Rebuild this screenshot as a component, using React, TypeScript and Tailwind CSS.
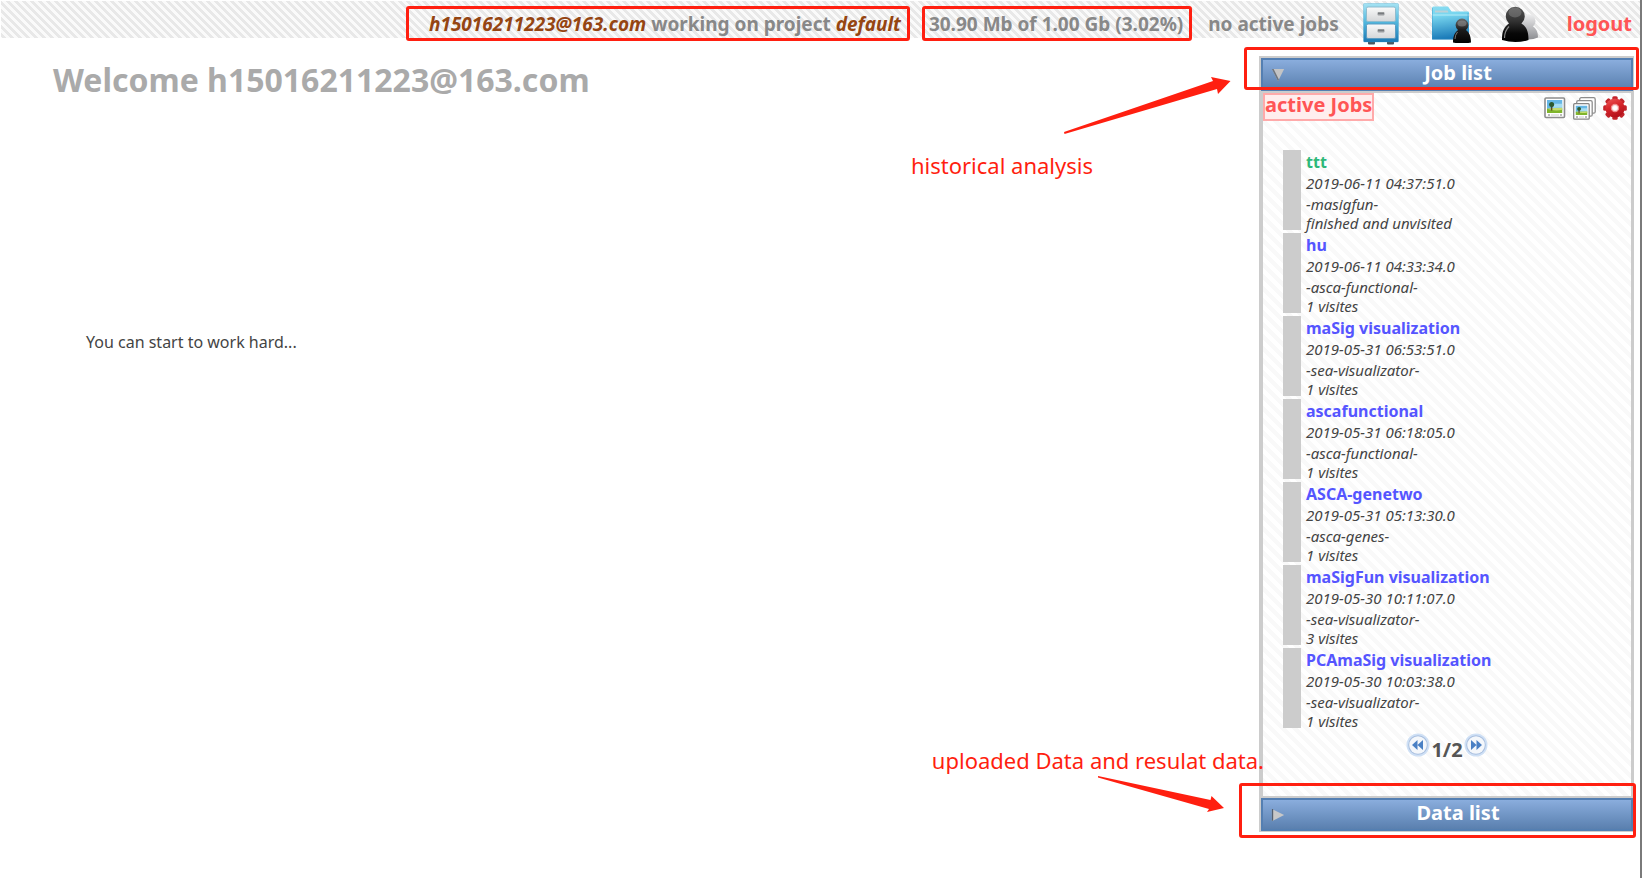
import type { ReactNode } from "react";

type Job = { name: string; date: string; tool: string; status: string; fresh?: boolean };

const jobs: Job[] = [
  { name: "ttt", date: "2019-06-11 04:37:51.0", tool: "-masigfun-", status: "finished and unvisited", fresh: true },
  { name: "hu", date: "2019-06-11 04:33:34.0", tool: "-asca-functional-", status: "1 visites" },
  { name: "maSig visualization", date: "2019-05-31 06:53:51.0", tool: "-sea-visualizator-", status: "1 visites" },
  { name: "ascafunctional", date: "2019-05-31 06:18:05.0", tool: "-asca-functional-", status: "1 visites" },
  { name: "ASCA-genetwo", date: "2019-05-31 05:13:30.0", tool: "-asca-genes-", status: "1 visites" },
  { name: "maSigFun visualization", date: "2019-05-30 10:11:07.0", tool: "-sea-visualizator-", status: "3 visites" },
  { name: "PCAmaSig visualization", date: "2019-05-30 10:03:38.0", tool: "-sea-visualizator-", status: "1 visites" },
];

function CabinetIcon() {
  return (
    <svg width="36" height="42" viewBox="0 0 36 42" aria-hidden="true">
      <defs>
        <linearGradient id="cab" x1="0" y1="0" x2="0" y2="1">
          <stop offset="0" stopColor="#a5e3f3" />
          <stop offset="0.5" stopColor="#4fb5dc" />
          <stop offset="1" stopColor="#1b78b4" />
        </linearGradient>
        <linearGradient id="drawer" x1="0" y1="0" x2="0" y2="1">
          <stop offset="0" stopColor="#fafafa" />
          <stop offset="1" stopColor="#d4d6d8" />
        </linearGradient>
      </defs>
      <rect x="5" y="38" width="7" height="3.5" rx="1" fill="#4a5660" />
      <rect x="24" y="38" width="7" height="3.5" rx="1" fill="#4a5660" />
      <rect x="0.5" y="0.5" width="35" height="38.5" rx="1" fill="url(#cab)" stroke="#3c9fcb" strokeOpacity="0.3" />
      <rect x="3.5" y="4" width="29" height="14.5" rx="1.5" fill="url(#drawer)" stroke="#8fbccf" />
      <rect x="3.5" y="21" width="29" height="14.5" rx="1.5" fill="url(#drawer)" stroke="#5c9cc2" />
      <path d="M14.5 9.5h7v2q0 1-1 1h-5q-1 0-1-1z" fill="#9a9da0" />
      <path d="M15 9.5h6v1.2h-6z" fill="#6a6e71" />
      <path d="M14.5 26.5h7v2q0 1-1 1h-5q-1 0-1-1z" fill="#9a9da0" />
      <path d="M15 26.5h6v1.2h-6z" fill="#6a6e71" />
    </svg>
  );
}

function FolderUserIcon() {
  return (
    <svg width="42" height="42" viewBox="0 0 42 42" aria-hidden="true">
      <defs>
        <linearGradient id="fold" x1="0" y1="0" x2="0.15" y2="1">
          <stop offset="0" stopColor="#8adcf1" />
          <stop offset="0.3" stopColor="#78d6ef" />
          <stop offset="1" stopColor="#1a7ab8" />
        </linearGradient>
        <linearGradient id="pawn" x1="0" y1="0" x2="0" y2="1">
          <stop offset="0" stopColor="#6b6b6b" />
          <stop offset="0.45" stopColor="#1c1c1c" />
          <stop offset="1" stopColor="#000" />
        </linearGradient>
      </defs>
      <path d="M1 7q0-1.5 1.5-1.5h14.5l3.5 5h16.5q1 0 1 1v27h-37z" fill="url(#fold)" />
      <path d="M4 9.5h12.5l1 2h-13.5z" fill="#bcd0d6" />
      <path d="M1 14h37" stroke="#b5ecf8" strokeWidth="1" />
      <path d="M1.5 7v31h35.5v-26" fill="none" stroke="#2f93c6" strokeOpacity="0.4" />
      <path d="M22 41.5c0-7 2-10 5-12.5a6.4 6.400 0 1 1 8 0c3 2.500 5 5.500 5 12.500q-9 2-18 0z" fill="url(#pawn)" />
      <ellipse cx="31" cy="22.5" rx="4.5" ry="3" fill="#9a9a9a" opacity="0.5" />
      <path d="M26.5 31q-2.5 3-2.5 7" stroke="#777" strokeWidth="1" fill="none" />
    </svg>
  );
}

function UsersIcon() {
  return (
    <svg width="38" height="38" viewBox="0 0 38 38" aria-hidden="true">
      <defs>
        <linearGradient id="ghost" x1="0" y1="0" x2="0" y2="1">
          <stop offset="0" stopColor="#eeeeef" />
          <stop offset="1" stopColor="#8d8e92" />
        </linearGradient>
        <linearGradient id="body" x1="0" y1="0" x2="0" y2="1">
          <stop offset="0" stopColor="#555" />
          <stop offset="0.4" stopColor="#333" />
          <stop offset="0.75" stopColor="#080808" />
          <stop offset="1" stopColor="#000" />
        </linearGradient>
      </defs>
      <path d="M18 33c0-7 1-9 5-11.5a7 7 0 1 1 9 0c4 2.5 5 6.5 5 11q-8 3.5-19 0.5z" fill="url(#ghost)" />
      <path d="M1 35c0-9 2-13 7-16.5a9.5 9.5 0 1 1 12.5 0c5 3.5 7 7.5 7 16.5q-13 4-26.5 0z" fill="url(#body)" />
      <ellipse cx="14" cy="7.5" rx="6.5" ry="5" fill="#999" opacity="0.4" />
      <path d="M8 21.5q-4.5 4.5-4.5 11.5" stroke="#888" strokeWidth="1.2" fill="none" />
    </svg>
  );
}

function Scene() {
  return (
    <>
      <rect x="0" y="0" width="16" height="10" fill="#65b7e6" />
      <path d="M6 4h10v4H6z" fill="#a5dcf2" />
      <rect x="0" y="9" width="16" height="4.5" fill="#7fb52c" />
      <path d="M0 9q8 3 16 1v-2q-8 0-16 1z" fill="#c6dc70" />
      <path d="M4 5h1.5v6h-1.5z" fill="#5d4527" />
      <circle cx="4.8" cy="4.8" r="2.6" fill="#2c5a30" />
    </>
  );
}

function PictureIcon() {
  return (
    <svg width="22" height="22" viewBox="0 0 22 22" aria-hidden="true">
      <rect x="1" y="1" width="19.5" height="19.5" rx="1" fill="#fff" stroke="#8d8d8d" strokeWidth="1.6" />
      <svg x="3" y="3" width="15.5" height="13" viewBox="0 0 16 13.5" preserveAspectRatio="none"><Scene /></svg>
      <path d="M4 18h2m10 0h2" stroke="#777" />
      <path d="M7 18h8" stroke="#ccc" />
    </svg>
  );
}

function PicturesIcon() {
  return (
    <svg width="23" height="23" viewBox="0 0 23 23" aria-hidden="true">
      <rect x="6.7" y="0.7" width="15.5" height="15.5" rx="1.5" fill="#fff" stroke="#8d8d8d" strokeWidth="1.3" />
      <rect x="3.7" y="3.7" width="15.5" height="15.5" rx="1.5" fill="#fff" stroke="#8d8d8d" strokeWidth="1.3" />
      <rect x="0.7" y="6.7" width="15.5" height="15.5" rx="1" fill="#fff" stroke="#858585" strokeWidth="1.3" />
      <svg x="2.5" y="8.5" width="12" height="9.5" viewBox="0 0 16 13.5" preserveAspectRatio="none"><Scene /></svg>
      <path d="M3 20h2m7 0h2" stroke="#777" />
      <path d="M6 20h5" stroke="#ccc" />
    </svg>
  );
}

function GearIcon() {
  const teeth = [0, 45, 90, 135, 180, 225, 270, 315];
  return (
    <svg width="24" height="24" viewBox="0 0 24 24" aria-hidden="true">
      <defs>
        <linearGradient id="gear" x1="0" y1="0" x2="0.4" y2="1">
          <stop offset="0" stopColor="#ee5b5b" />
          <stop offset="0.5" stopColor="#d8262b" />
          <stop offset="1" stopColor="#b5121b" />
        </linearGradient>
      </defs>
      {teeth.map((a) => (
        <rect key={a} x="9.3" y="0.2" width="5.4" height="5" rx="1.5" fill="#c2242a" transform={`rotate(${a} 12 12)`} />
      ))}
      <circle cx="12" cy="12" r="9.6" fill="url(#gear)" />
      <circle cx="12" cy="12" r="3.6" fill="#fbeaea" stroke="#f08d8d" strokeWidth="1.2" />
      <circle cx="12" cy="12" r="2" fill="#fff" />
    </svg>
  );
}

function PagerIcon({ forward = false }: { forward?: boolean }) {
  return (
    <svg width="24" height="24" viewBox="0 0 24 24" aria-hidden="true" className={forward ? "rotate-180" : ""}>
      <circle cx="12" cy="12" r="11.5" fill="#cfe0f5" />
      <circle cx="12" cy="12" r="9.8" fill="#a9bfdf" />
      <circle cx="12" cy="12" r="8.8" fill="#f4f7fb" />
      <path d="M11.5 7v10L6 12zM17 7v10L11.5 12z" fill="#4a80c4" />
    </svg>
  );
}

function PanelHeader({ title, open }: { title: string; open: boolean }) {
  return (
    <button
      type="button"
      aria-expanded={open}
      className="flex h-[33px] w-full items-center border-2 border-[#547fb2] bg-linear-to-b from-[#8aaddd] to-[#5a80af] pl-2 text-white"
    >
      <svg width="14" height="14" viewBox="0 0 16 16" aria-hidden="true" className="shrink-0">
        {open ? (
          <>
            <path d="M1 1h14L8 15z" fill="#c4c4c4" />
            <path d="M1 1h2l6 12-1 2z" fill="#6b7480" />
          </>
        ) : (
          <>
            <path d="M1 1v14l14-7z" fill="#c8c8c8" />
            <path d="M1 1h1.5v13L1 15z" fill="#55606e" />
          </>
        )}
      </svg>
      <span className="flex-1 pb-1 text-center text-xl leading-6 font-bold">{title}</span>
    </button>
  );
}

function Highlight({ className }: { className: string }) {
  return <div className={`pointer-events-none absolute z-10 rounded-[3px] border-3 border-[#ff1f10] ${className}`} />;
}

function Note({ className, children }: { className: string; children: ReactNode }) {
  return <p className={`absolute z-10 text-[22px] leading-7 whitespace-nowrap text-[#ff1f10] ${className}`}>{children}</p>;
}

export default function App() {
  return (
    <div className="flex min-h-screen flex-col border-r-2 border-[#7a7a7a] bg-white font-['Noto_Sans',sans-serif] text-[#444]">
      <header className="mt-px ml-px flex h-[37px] items-start justify-end bg-[linear-gradient(45deg,#fafafa_25%,#e8e8e8_25%,#e8e8e8_50%,#fafafa_50%,#fafafa_75%,#e8e8e8_75%)] bg-size-[8px_8px] pr-2 text-[19px] leading-[30px] font-bold whitespace-nowrap text-[#888]">
        <p className="mt-[5px] mr-3 h-[35px] rounded-[3px] border-3 border-[#ff1f10] pr-1.5 pl-5">
          <em className="text-[#954512]">h15016211223@163.com</em> working on project <em className="text-[#954512]">default</em>
        </p>
        <p className="mt-[5px] mr-4 h-[35px] rounded-[3px] border-3 border-[#ff1f10] pr-1.5 pl-1">30.90 Mb of 1.00 Gb (3.02%)</p>
        <p className="mt-2 mr-6">no active jobs</p>
        <a href="#data" aria-label="Data" className="mt-0.5 mr-8"><CabinetIcon /></a>
        <a href="#projects" aria-label="Projects" className="mr-7"><FolderUserIcon /></a>
        <a href="#users" aria-label="Users" className="mt-1 mr-7"><UsersIcon /></a>
        <a href="#logout" className="mt-2 text-xl leading-[30px] text-[#ff5555]">logout</a>
      </header>

      <div className="flex flex-1 items-start justify-between">
        <main className="pt-5 pl-[53px]">
          <h1 className="text-[32px] leading-[44px] font-bold text-[#aaa]">Welcome h15016211223@163.com</h1>
          <p className="mt-[228px] ml-[33px] text-base leading-6">You can start to work hard...</p>
        </main>

        <aside className="relative mt-[18px] mr-[6px] w-[375px] shrink-0 border-t-2 border-r border-b border-l-2 border-[#ccc]">
          <section className="relative">
            <PanelHeader title="Job list" open />
            <Highlight className="-top-[11px] -right-[6px] -left-[17px] h-[43px]" />
            <div className="border-2 border-[#ccc] bg-[linear-gradient(45deg,#fff_25%,#f9f9f9_25%,#f9f9f9_50%,#fff_50%,#fff_75%,#f9f9f9_75%)] bg-size-[12px_12px]">
              <div className="flex h-7 items-start justify-between pr-1">
                <button type="button" className="h-7 border-2 border-[#ffaaaa] bg-[#ffeeee] pb-1 text-xl leading-5 font-bold text-[#ff5555]">active Jobs</button>
                <div className="flex items-center gap-[7px] pt-[3px]">
                  <button type="button" aria-label="Single view"><PictureIcon /></button>
                  <button type="button" aria-label="Group view"><PicturesIcon /></button>
                  <button type="button" aria-label="Settings"><GearIcon /></button>
                </div>
              </div>

              <ul className="mt-[29px] ml-5 flex flex-col gap-[3px]">
                {jobs.map((job) => (
                  <li key={job.name} className="flex h-20 gap-[5px]">
                    <span className="w-[18px] bg-[#ccc]" />
                    <div className="text-[15px] italic">
                      <a href="#job" className={`block text-base leading-6 font-bold not-italic ${job.fresh ? "text-[#2eb87a]" : "text-[#5555ff]"}`}>{job.name}</a>
                      <p className="leading-[18px]">{job.date}</p>
                      <p className="leading-6">{job.tool}</p>
                      <p className="leading-[14px]">{job.status}</p>
                    </div>
                  </li>
                ))}
              </ul>

              <nav aria-label="Job pages" className="mt-[5px] mb-[35px] flex h-7 items-start justify-center text-xl leading-[34px] font-bold text-[#555]">
                <button type="button" aria-label="Previous page"><PagerIcon /></button>
                <span className="px-px">1/2</span>
                <button type="button" aria-label="Next page"><PagerIcon forward /></button>
              </nav>
            </div>
          </section>

          <section className="relative">
            <PanelHeader title="Data list" open={false} />
            <Highlight className="-top-[15px] -right-[3px] -left-[22px] h-[55px]" />
          </section>

          <Note className="top-[93px] right-[540px]">historical analysis</Note>
          <svg width="168" height="60" viewBox="0 0 168 60" aria-hidden="true" className="absolute top-[18px] right-[402px] z-10">
            <path d="M1 56L150 5 148 1 167.5 5 155 18 154 13 1.5 58z" fill="#ff1f10" />
          </svg>
          <Note className="right-[369px] bottom-[57px]">uploaded Data and resulat data.</Note>
          <svg width="128" height="40" viewBox="0 0 128 40" aria-hidden="true" className="absolute right-[408px] bottom-4 z-10">
            <path d="M1 1L113.5 25 114.5 21 127 33 110 37 112 34 1 2.5z" fill="#ff1f10" />
          </svg>
        </aside>
      </div>
    </div>
  );
}
